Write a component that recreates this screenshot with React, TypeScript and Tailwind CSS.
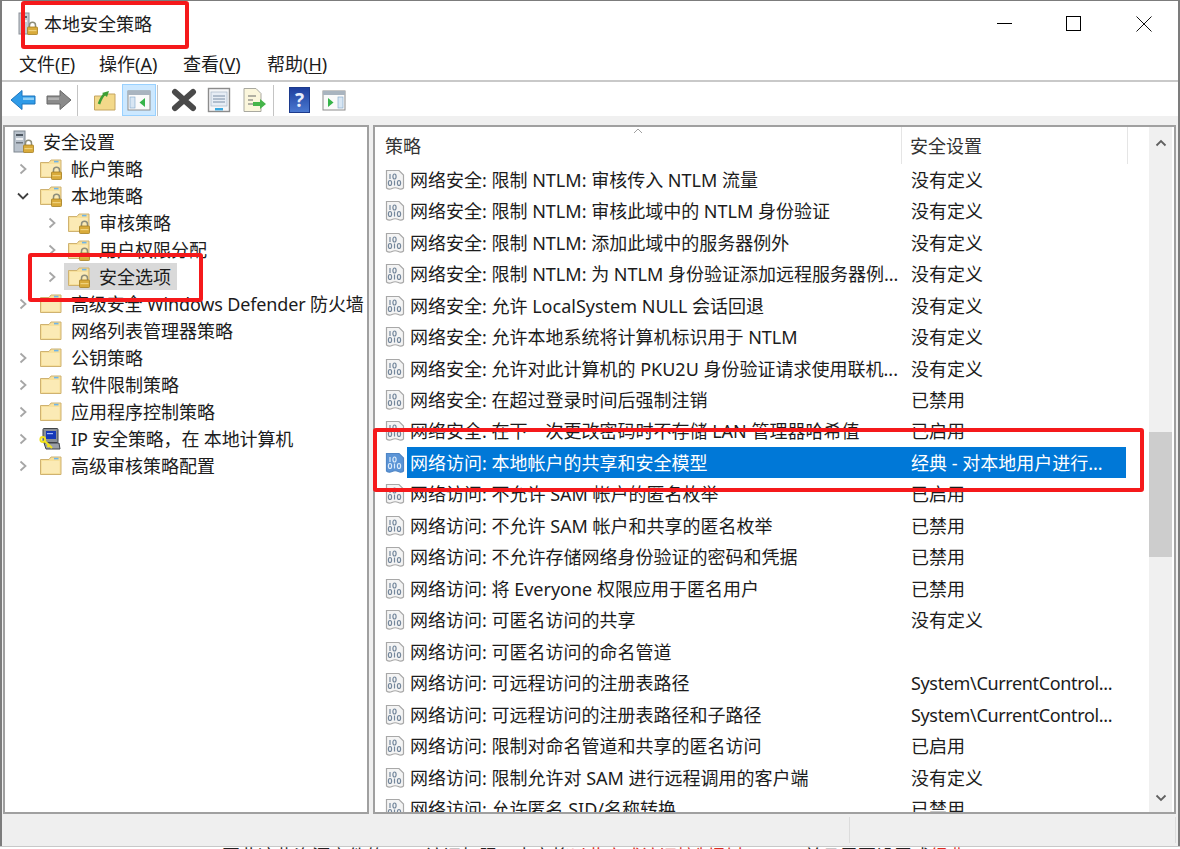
const rows = [
  ["网络安全: 限制 NTLM: 审核传入 NTLM 流量", "没有定义"],
  ["网络安全: 限制 NTLM: 审核此域中的 NTLM 身份验证", "没有定义"],
  ["网络安全: 限制 NTLM: 添加此域中的服务器例外", "没有定义"],
  ["网络安全: 限制 NTLM: 为 NTLM 身份验证添加远程服务器例...", "没有定义"],
  ["网络安全: 允许 LocalSystem NULL 会话回退", "没有定义"],
  ["网络安全: 允许本地系统将计算机标识用于 NTLM", "没有定义"],
  ["网络安全: 允许对此计算机的 PKU2U 身份验证请求使用联机...", "没有定义"],
  ["网络安全: 在超过登录时间后强制注销", "已禁用"],
  ["网络安全: 在下一次更改密码时不存储 LAN 管理器哈希值", "已启用"],
  ["网络访问: 本地帐户的共享和安全模型", "经典 - 对本地用户进行..."],
  ["网络访问: 不允许 SAM 帐户的匿名枚举", "已启用"],
  ["网络访问: 不允许 SAM 帐户和共享的匿名枚举", "已禁用"],
  ["网络访问: 不允许存储网络身份验证的密码和凭据", "已禁用"],
  ["网络访问: 将 Everyone 权限应用于匿名用户", "已禁用"],
  ["网络访问: 可匿名访问的共享", "没有定义"],
  ["网络访问: 可匿名访问的命名管道", ""],
  ["网络访问: 可远程访问的注册表路径", "System\\CurrentControl..."],
  ["网络访问: 可远程访问的注册表路径和子路径", "System\\CurrentControl..."],
  ["网络访问: 限制对命名管道和共享的匿名访问", "已启用"],
  ["网络访问: 限制允许对 SAM 进行远程调用的客户端", "没有定义"],
  ["网络访问: 允许匿名 SID/名称转换", "已禁用"],
]

type TreeItem = { label: string; indent: number; arrow: "right" | "down" | "none"; icon: "lockFolder" | "folder" | "ip" | "server"; selected?: boolean }

const tree: TreeItem[] = [
  { label: "安全设置", indent: 0, arrow: "none", icon: "server" },
  { label: "帐户策略", indent: 1, arrow: "right", icon: "lockFolder" },
  { label: "本地策略", indent: 1, arrow: "down", icon: "lockFolder" },
  { label: "审核策略", indent: 2, arrow: "right", icon: "lockFolder" },
  { label: "用户权限分配", indent: 2, arrow: "right", icon: "lockFolder" },
  { label: "安全选项", indent: 2, arrow: "right", icon: "lockFolder", selected: true },
  { label: "高级安全 Windows Defender 防火墙", indent: 1, arrow: "right", icon: "folder" },
  { label: "网络列表管理器策略", indent: 1, arrow: "none", icon: "folder" },
  { label: "公钥策略", indent: 1, arrow: "right", icon: "folder" },
  { label: "软件限制策略", indent: 1, arrow: "right", icon: "folder" },
  { label: "应用程序控制策略", indent: 1, arrow: "right", icon: "folder" },
  { label: "IP 安全策略，在 本地计算机", indent: 1, arrow: "right", icon: "ip" },
  { label: "高级审核策略配置", indent: 1, arrow: "right", icon: "folder" },
]

function Lock({ x, y }: { x: number; y: number }) {
  return (
    <g transform={`translate(${x} ${y})`}>
      <path d="M2.5 5V3.2a3 3 0 0 1 6 0V5" fill="none" stroke="#8d8d7a" strokeWidth="1.5" />
      <rect x="0.5" y="5" width="10" height="7.5" rx="0.8" fill="#d9ab3b" stroke="#a67f22" strokeWidth="0.8" />
      <rect x="1.5" y="8" width="8" height="1.2" fill="#f0d27c" />
    </g>
  )
}

function Folder({ lock }: { lock?: boolean }) {
  return (
    <svg width="24" height="22" viewBox="0 0 24 22" className="shrink-0">
      <path d="M1.5 4.5 L1.5 19.5 H22 V2 H12 L10 4.5 Z" fill="#f7e09b" stroke="#cfb271" strokeWidth="1" />
      <path d="M3 6 H20.5 V18 H3 Z" fill="#fbeab5" />
      <rect x="15" y="2.8" width="4.5" height="1.6" fill="#6fb5e8" />
      {lock && <Lock x={12} y={9} />}
    </svg>
  )
}

function ServerLock() {
  return (
    <svg width="22" height="24" viewBox="0 0 22 24" className="shrink-0">
      <rect x="1" y="1" width="11" height="21" fill="#b9c2cc" stroke="#7f8790" />
      <rect x="3" y="4" width="7" height="2" fill="#4c5660" />
      <rect x="3" y="8" width="7" height="2" fill="#eef1f4" />
      <rect x="3" y="12" width="7" height="1.5" fill="#6e7780" />
      <Lock x={10} y={10} />
    </svg>
  )
}

function IpIcon() {
  return (
    <svg width="24" height="24" viewBox="0 0 24 24" className="shrink-0">
      <rect x="4" y="1.5" width="15" height="14" rx="1" fill="#8a8f96" stroke="#3f4348" />
      <rect x="7" y="4" width="10" height="8" fill="#1538b8" />
      <rect x="8" y="6" width="6" height="1.2" fill="#9fb8ff" />
      <path d="M5 16 H20 L21 22 H7 Z" fill="#9b9fa6" stroke="#3f4348" />
      <circle cx="3.8" cy="12.5" r="2.4" fill="none" stroke="#f1e21f" strokeWidth="2" />
      <path d="M5.5 14 L13 21 M10 18 L8.5 20" stroke="#f1e21f" strokeWidth="2.2" fill="none" />
    </svg>
  )
}

function TreeArrow({ dir }: { dir: TreeItem["arrow"] }) {
  if (dir === "none") return <span className="w-[14px] shrink-0" />
  return (
    <svg width="14" height="14" viewBox="0 0 14 14" className="shrink-0">
      {dir === "right" ? (
        <path d="M4.5 2.5 L9.5 7 L4.5 11.5" fill="none" stroke="#a6a6a6" strokeWidth="1.8" />
      ) : (
        <path d="M2 4.5 L7 9.5 L12 4.5" fill="none" stroke="#404040" strokeWidth="1.8" />
      )}
    </svg>
  )
}

function PolicyIcon({ selected }: { selected?: boolean }) {
  const bits = selected ? "#dcebfa" : "#74879c"
  return (
    <svg width="20" height="22" viewBox="0 0 20 22" className="shrink-0">
      <path
        d="M1.5 1.5 H14 L18.5 6 V19 Q16 21 13.5 19.5 Q10 18 7 19.5 Q4 21 1.5 19 Z"
        fill={selected ? "#5b94d6" : "#f4f4f4"}
        stroke={selected ? "#4f86c6" : "#a8a8a8"}
        strokeWidth="1.2"
      />
      <g fill="none" stroke={bits} strokeWidth="1.2">
        <path d="M5 5 V10" />
        <ellipse cx="9.5" cy="7.5" rx="1.6" ry="2.5" />
        <ellipse cx="5" cy="14" rx="1.6" ry="2.5" />
        <path d="M9.5 11.5 V16.5" />
        <ellipse cx="14" cy="14" rx="1.6" ry="2.5" />
      </g>
    </svg>
  )
}

function Toolbar() {
  return (
    <div className="h-[34px] flex items-center pl-[8px] pt-[2px] bg-white shrink-0">
      <svg width="27" height="24" viewBox="0 0 27 24" className="shrink-0">
        <path d="M1 12 L12 2.5 V8 H25 V16 H12 V21.5 Z" fill="#2f9be8" stroke="#1d75bd" strokeWidth="1" />
        <path d="M13 9.5 H24 V12 H13 Z" fill="#8fd0f7" />
      </svg>
      <svg width="27" height="24" viewBox="0 0 27 24" className="shrink-0 ml-[8px]">
        <path d="M26 12 L15 2.5 V8 H2 V16 H15 V21.5 Z" fill="#8b8b8b" stroke="#686868" strokeWidth="1" />
        <path d="M3 9.5 H14 V12 H3 Z" fill="#b2b2b2" />
      </svg>
      <span className="w-px h-[31px] bg-[#c4c4c4] ml-[5px]" />
      <svg width="24" height="24" viewBox="0 0 24 24" className="shrink-0 ml-[15px]">
        <path d="M1.5 8 L1.5 22 H22 V6 H13 L11 8 Z" fill="#f3d98a" stroke="#c5a560" />
        <path d="M6 16 C8 10 9 8 12 6" fill="none" stroke="#3f9e35" strokeWidth="2.6" />
        <path d="M9 5 L16 3 L14 9 Z" fill="#3f9e35" />
      </svg>
      <span className="flex items-center justify-center w-[34px] h-[32px] ml-[5px] bg-[#cce8ff] border border-[#99d1ff]">
        <svg width="24" height="22" viewBox="0 0 24 22">
          <rect x="1" y="2" width="22" height="19" fill="#fafafa" stroke="#8c8c8c" />
          <rect x="1" y="2" width="22" height="4" fill="#a9b4bf" />
          <rect x="3" y="8" width="5" height="11" fill="#d8e6f3" stroke="#7ea4c8" strokeWidth="0.6" />
          <path d="M18 9 V18 L12.5 13.5 Z" fill="#37b44a" />
        </svg>
      </span>
      <span className="w-px h-[31px] bg-[#c4c4c4] ml-[1px]" />
      <svg width="26" height="24" viewBox="0 0 26 24" className="shrink-0 ml-[13px]">
        <path d="M4 4 L22 20 M22 4 L4 20" stroke="#4a4a4a" strokeWidth="6" strokeLinecap="round" />
      </svg>
      <svg width="24" height="26" viewBox="0 0 24 26" className="shrink-0 ml-[10px]">
        <rect x="1.5" y="1.5" width="21" height="23" fill="#f5f6f8" stroke="#8c8c8c" strokeWidth="1.4" />
        <rect x="4" y="5" width="16" height="14" fill="#e7edf5" stroke="#a9b8c9" strokeWidth="0.7" />
        <path d="M6 9 H18 M6 12 H18 M6 15 H18" stroke="#7b8ea6" strokeWidth="1" />
        <rect x="8" y="21" width="8" height="2.4" fill="#39a8e0" />
      </svg>
      <svg width="25" height="26" viewBox="0 0 25 26" className="shrink-0 ml-[11px]">
        <path d="M2 1.5 H14 L19 6.5 V24.5 H2 Z" fill="#fbf6dc" stroke="#a9a9a0" />
        <path d="M6 9 H14 M6 13 H11 M6 17 H11" stroke="#6b6b6b" strokeWidth="1.2" />
        <path d="M11 15 H18 V12 L24 17 L18 22 V19 H11 Z" fill="#46b54a" />
      </svg>
      <span className="w-px h-[31px] bg-[#c4c4c4] ml-[6px]" />
      <span className="flex items-center justify-center w-[21px] h-[26px] ml-[15px] bg-gradient-to-b from-[#1f3f9e] to-[#4a78d0] border border-[#1c3a8c] text-[#e8eefc] text-[19px] font-bold leading-none">
        ?
      </span>
      <svg width="24" height="22" viewBox="0 0 24 22" className="shrink-0 ml-[12px]">
        <rect x="1" y="2" width="22" height="19" fill="#fafafa" stroke="#8c8c8c" />
        <rect x="1" y="2" width="22" height="4" fill="#a9b4bf" />
        <rect x="16" y="8" width="5" height="11" fill="#d8e6f3" stroke="#7ea4c8" strokeWidth="0.6" />
        <path d="M6 9 V18 L11.5 13.5 Z" fill="#37b44a" />
      </svg>
    </div>
  )
}

function Menu({ label, hot, className }: { label: string; hot: string; className: string }) {
  return (
    <span className={className}>
      {label}(<span className="underline underline-offset-2">{hot}</span>)
    </span>
  )
}

export default function App() {
  return (
    <div
      className="relative w-[1180px] h-[849px] overflow-hidden bg-white text-[18px] text-[#1c1c1c]"
      style={{ fontFamily: '"Noto Sans", "Noto Sans CJK SC", sans-serif' }}
    >
      <div className="h-[846px] flex flex-col border-t border-l-2 border-r-2 border-[#7c7c7c] bg-white">
        {/* title bar */}
        <div className="h-[47px] flex items-center pl-[16px] pb-[2px] shrink-0">
          <svg width="22" height="24" viewBox="0 0 22 24" className="shrink-0">
            <rect x="1" y="1" width="10" height="21" fill="#c4cad1" stroke="#8a9098" />
            <rect x="3" y="4" width="6" height="2" fill="#59626b" />
            <rect x="3" y="8" width="6" height="2" fill="#eef1f4" />
            <Lock x={9} y={10} />
          </svg>
          <span className="ml-[4px] leading-none">本地安全策略</span>
          <span className="ml-auto w-[15px] h-px bg-black mr-[54px]" />
          <span className="w-[15px] h-[15px] border border-black mr-[55px]" />
          <svg width="16" height="16" viewBox="0 0 16 16" className="mr-[26px]">
            <path d="M0.5 0.5 L15.5 15.5 M15.5 0.5 L0.5 15.5" stroke="#111" strokeWidth="1" />
          </svg>
        </div>
        {/* menu bar */}
        <div className="h-[34px] flex items-center pl-[17px] border-b-2 border-[#c9c9c9] shrink-0">
          <Menu label="文件" hot="F" className="w-[80px]" />
          <Menu label="操作" hot="A" className="w-[84px]" />
          <Menu label="查看" hot="V" className="w-[84px]" />
          <Menu label="帮助" hot="H" className="" />
        </div>
        <Toolbar />
        {/* panes */}
        <div className="flex-1 min-h-0 flex flex-col bg-[#f0f0f0] pt-[9px]">
          <div className="h-[689px] flex shrink-0 pl-px pr-[2px] gap-[4px]">
            <div className="w-[366px] shrink-0 border-2 border-[#a0a0a0] bg-white pt-px overflow-hidden">
              {tree.map((item) => (
                <div
                  key={item.label}
                  className={
                    item.indent === 0
                      ? "h-[27px] flex items-center pl-[8px]"
                      : item.indent === 1
                        ? "h-[27px] flex items-center pl-[11px]"
                        : "h-[27px] flex items-center pl-[40px]"
                  }
                >
                  {item.indent > 0 && <TreeArrow dir={item.arrow} />}
                  <span
                    className={
                      item.selected
                        ? "flex items-center h-[27px] bg-[#d9d9d9] ml-[5px] pl-[3px] pr-[6px]"
                        : item.indent === 0
                          ? "flex items-center h-[27px]"
                          : item.indent === 1
                            ? "flex items-center h-[27px] ml-[9px]"
                            : "flex items-center h-[27px] ml-[8px]"
                    }
                  >
                    {item.icon === "lockFolder" && <Folder lock />}
                    {item.icon === "folder" && <Folder />}
                    {item.icon === "server" && <ServerLock />}
                    {item.icon === "ip" && <IpIcon />}
                    <span
                      className={
                        /[A-Za-z]/.test(item.label)
                          ? "ml-[8px] whitespace-nowrap leading-none tracking-[-0.15px]"
                          : "ml-[8px] whitespace-nowrap leading-none"
                      }
                    >
                      {item.label}
                    </span>
                  </span>
                </div>
              ))}
            </div>
            <div className="flex-1 min-w-0 flex border-2 border-[#a0a0a0] bg-white overflow-hidden">
              <div className="flex-1 min-w-0 overflow-hidden">
                <div className="relative h-[37px] flex items-center text-[#333]">
                  <span className="w-[527px] pl-[10px] pt-[2px] border-r border-[#e5e5e5] h-full flex items-center">策略</span>
                  <span className="w-[226px] pl-[8px] pt-[2px] border-r border-[#e5e5e5] h-full flex items-center">安全设置</span>
                  <svg width="10" height="6" viewBox="0 0 10 6" className="absolute left-[258px] top-[1px]">
                    <path d="M1 5 L5 1 L9 5" fill="none" stroke="#a0a0a0" />
                  </svg>
                </div>
                {rows.map(([name, value], i) => (
                  <div key={name} className="h-[31.47px] flex items-center pl-[10px]">
                    <PolicyIcon selected={i === 9} />
                    <div
                      className={
                        i === 9
                          ? "ml-[2px] pl-[3px] w-[719px] h-[31px] flex items-center bg-[#0078d7] text-white"
                          : "ml-[2px] pl-[3px] w-[719px] h-[31px] flex items-center"
                      }
                    >
                      <span className="w-[501px] whitespace-nowrap leading-none">{name}</span>
                      <span
                        className={
                          value.startsWith("System")
                            ? "whitespace-nowrap leading-none tracking-[-0.35px]"
                            : "whitespace-nowrap leading-none"
                        }
                      >
                        {value}
                      </span>
                    </div>
                  </div>
                ))}
              </div>
              <div className="w-[23px] mr-[2px] shrink-0 bg-[#f0f0f0] flex flex-col items-center">
                <svg width="12" height="8" viewBox="0 0 12 8" className="mt-[12px]">
                  <path d="M1.5 6.5 L6 2 L10.5 6.5" fill="none" stroke="#606060" strokeWidth="1.8" />
                </svg>
                <div className="w-full h-[125px] mt-[285px] bg-[#cdcdcd]" />
                <svg width="12" height="8" viewBox="0 0 12 8" className="mt-auto mb-[10px]">
                  <path d="M1.5 1.5 L6 6 L10.5 1.5" fill="none" stroke="#606060" strokeWidth="1.8" />
                </svg>
              </div>
            </div>
          </div>
          {/* status bar */}
          <div className="flex-1 flex justify-end bg-[#efefef] py-[3px] pr-[2px]">
            <span className="w-[327px] border-l border-r border-[#dcdcdc]" />
          </div>
        </div>
      </div>
      {/* page text behind the window, only its top edge shows */}
      <div className="h-[3px] overflow-hidden bg-white border-t border-[#c8c8c8] pl-[222px] whitespace-nowrap leading-none text-[#222]">
        因此这些资源文件的 ACL 访问权限，本文将<span className="text-[#d92b20]">以此方式访问控制列表</span> ACL，并且需要设置成<span className="text-[#d92b20]">经典</span>
      </div>

      {/* red annotation boxes */}
      <div className="absolute left-[21px] top-px w-[168px] h-[48px] border-4 border-[#f5191b] rounded-[3px]" />
      <div className="absolute left-[28px] top-[253px] w-[175px] h-[49px] border-4 border-[#f5191b] rounded-[3px]" />
      <div className="absolute left-[373px] top-[428px] w-[771px] h-[64px] border-4 border-[#f5191b] rounded-[3px]" />
    </div>
  )
}
